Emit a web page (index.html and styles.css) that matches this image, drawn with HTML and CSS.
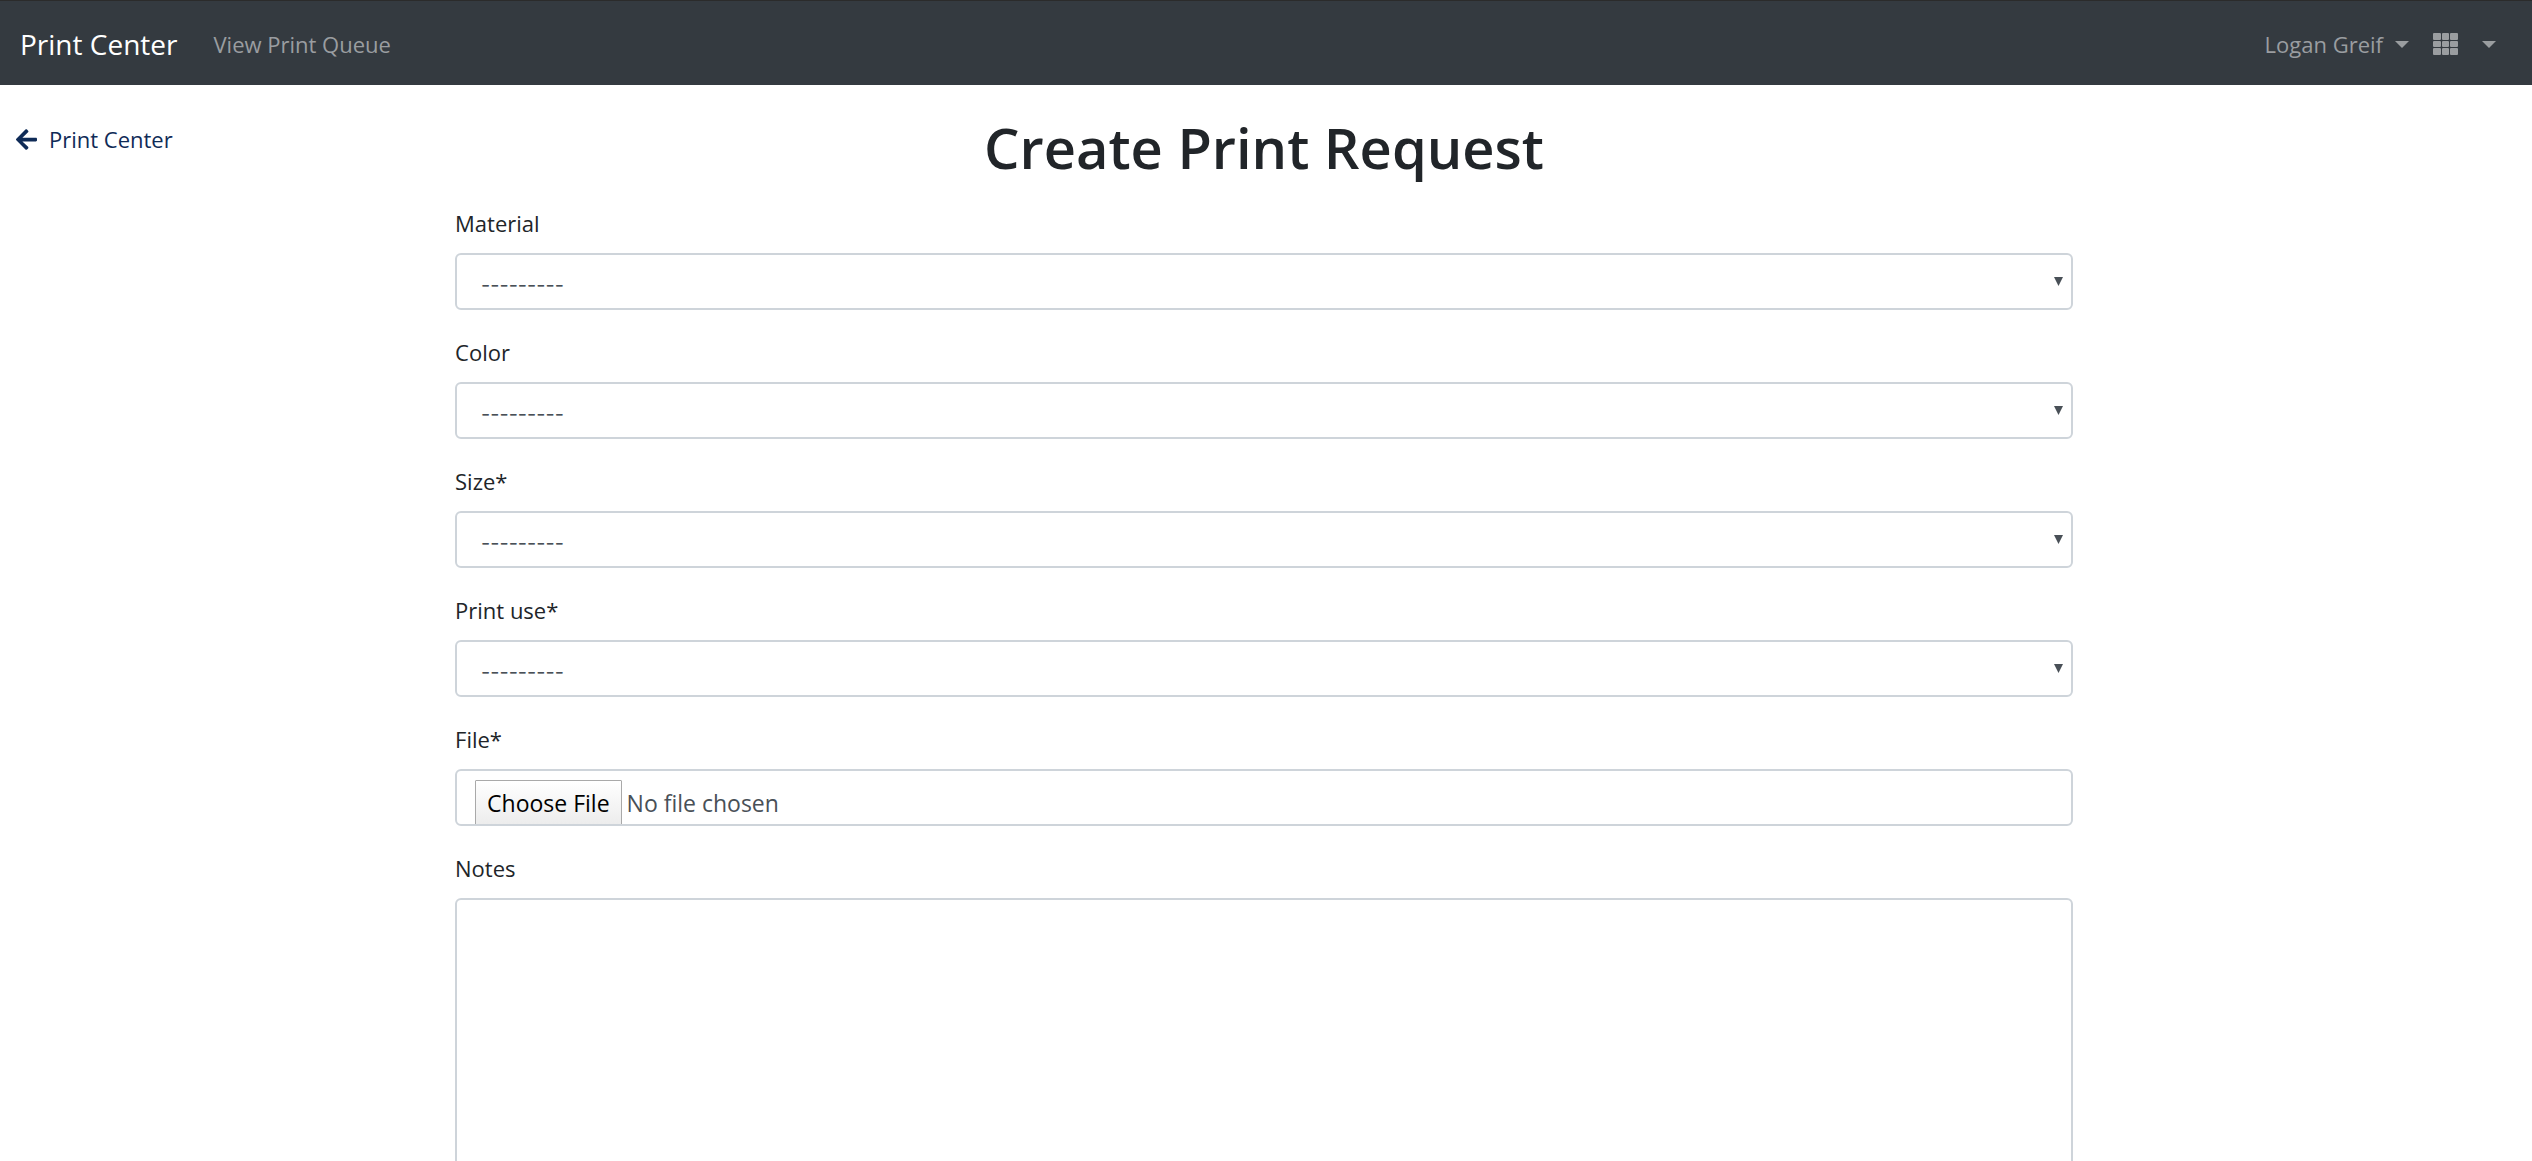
FILE: index.html
```html
<!DOCTYPE html>
<html lang="en">
<head>
  <meta charset="UTF-8" />
  <meta name="viewport" content="width=device-width, initial-scale=1" />
  <title>Create Print Request</title>
  <link rel="stylesheet" href="styles.css">
</head>
<body>

<nav class="navbar">
  <a class="brand" href="#">Print Center</a>
  <a class="nav-link" href="#">View Print Queue</a>

  <div class="nav-right">
    <button type="button" class="nav-link dropdown">Logan Greif <span class="caret"></span></button>
    <button type="button" class="nav-link dropdown apps" aria-label="Apps">
      <svg class="grid-icon" viewBox="0 0 25 22" fill="currentColor" aria-hidden="true">
        <rect x="0" y="0" width="8" height="7" rx="1"/>
        <rect x="9" y="0" width="7" height="7" rx="1"/>
        <rect x="17" y="0" width="8" height="7" rx="1"/>
        <rect x="0" y="8" width="8" height="6" rx="1"/>
        <rect x="9" y="8" width="7" height="6" rx="1"/>
        <rect x="17" y="8" width="8" height="6" rx="1"/>
        <rect x="0" y="15" width="8" height="7" rx="1"/>
        <rect x="9" y="15" width="7" height="7" rx="1"/>
        <rect x="17" y="15" width="8" height="7" rx="1"/>
      </svg>
      <span class="caret"></span>
    </button>
  </div>
</nav>

<main class="page">
  <div class="side">
    <a class="back" href="#">
      <svg class="arrow" viewBox="0 0 448 448" fill="currentColor" aria-hidden="true">
        <path d="M257.5 413.5l-22.2 22.2c-9.4 9.4-24.6 9.4-33.9 0L7 241c-9.4-9.4-9.4-24.6 0-33.9L201.4 12.7c9.4-9.4 24.6-9.4 33.9 0l22.2 22.2c9.5 9.5 9.3 25-.4 34.3L136.600 184H424c13.3 0 24 10.7 24 24v32c0 13.3-10.7 24-24 24H136.6l120.5 114.8c9.8 9.3 10 24.8.4 34.700z"/>
      </svg>
      Print Center
    </a>
  </div>

  <form class="content">
    <h1>Create Print Request</h1>

    <div class="form-group">
      <label for="material">Material</label>
      <select id="material" class="form-control">
        <option value="">---------</option>
      </select>
    </div>

    <div class="form-group">
      <label for="color">Color</label>
      <select id="color" class="form-control">
        <option value="">---------</option>
      </select>
    </div>

    <div class="form-group">
      <label for="size">Size*</label>
      <select id="size" class="form-control" required>
        <option value="">---------</option>
      </select>
    </div>

    <div class="form-group">
      <label for="use">Print use*</label>
      <select id="use" class="form-control" required>
        <option value="">---------</option>
      </select>
    </div>

    <div class="form-group">
      <label for="file">File*</label>
      <input type="file" id="file" class="form-control" required>
    </div>

    <div class="form-group">
      <label for="notes">Notes</label>
      <textarea id="notes" class="form-control" rows="10"></textarea>
    </div>
  </form>
</main>

</body>
</html>
```

FILE: styles.css
```css
* {
  box-sizing: border-box;
}

body {
  margin: 0;
  font-family: "Open Sans", "Noto Sans", sans-serif;
  font-size: 22px;
  line-height: 36px;
  color: #212529;
  background-color: #fff;
}

a {
  text-decoration: none;
}

/* navbar */
.navbar {
  display: flex;
  align-items: center;
  height: 85px;
  padding: 2px 36px 0 20px;
  border-top: 1px solid #2b2b2b;
  background-color: #343a40;
}

.brand {
  margin-right: 36px;
  font-size: 28px;
  color: #fff;
}

.nav-link {
  padding: 0;
  border: none;
  background: none;
  font: inherit;
  color: #9a9da0;
}

.nav-right {
  display: flex;
  align-items: center;
  gap: 24px;
  margin-left: auto;
}

.dropdown {
  display: flex;
  align-items: center;
  gap: 12px;
  cursor: pointer;
}

.apps {
  gap: 24px;
}

.caret {
  border-top: 7px solid;
  border-left: 7px solid transparent;
  border-right: 7px solid transparent;
}

.grid-icon {
  width: 25px;
  height: 22px;
}

/* page */
.page {
  display: grid;
  grid-template-columns: 1fr 64% 1fr;
  padding: 26px 4px 0 0;
}

.side {
  padding: 10px 0 0 16px;
}

.back {
  display: inline-flex;
  align-items: center;
  gap: 12px;
  color: #0f2b57;
}

.arrow {
  width: 21px;
  height: 21px;
}

h1 {
  margin: 0 0 22px;
  font-size: 56px;
  font-weight: 600;
  line-height: 72px;
  text-align: center;
}

.form-group {
  margin-bottom: 24px;
}

label {
  display: block;
  margin-bottom: 12px;
}

.form-control {
  display: block;
  width: 100%;
  height: 57px;
  padding: 9px 18px;
  border: 2px solid #ced4da;
  border-radius: 6px;
  background-color: #fff;
  font: inherit;
  color: #495057;
}

select.form-control {
  appearance: none;
  padding: 12px 24px 6px;
  font-family: Inter, sans-serif;
  font-size: 20px;
  background-image: url("data:image/svg+xml,%3Csvg xmlns='http://www.w3.org/2000/svg' viewBox='0 0 10 10'%3E%3Cpath d='M0 0h10L5 10z' fill='%23495057'/%3E%3C/svg%3E");
  background-repeat: no-repeat;
  background-position: right 8px center;
  background-size: 9px 9px;
}

input.form-control {
  overflow: hidden;
  font-size: 23px;
}

.form-control::file-selector-button {
  height: 46px;
  margin-right: 5px;
  padding: 1px 11px;
  border: 1px solid #a9a9a9;
  border-radius: 1px;
  background: linear-gradient(#fff, #ececec);
  font: inherit;
  color: #000;
}

textarea.form-control {
  height: auto;
  resize: none;
}
```
